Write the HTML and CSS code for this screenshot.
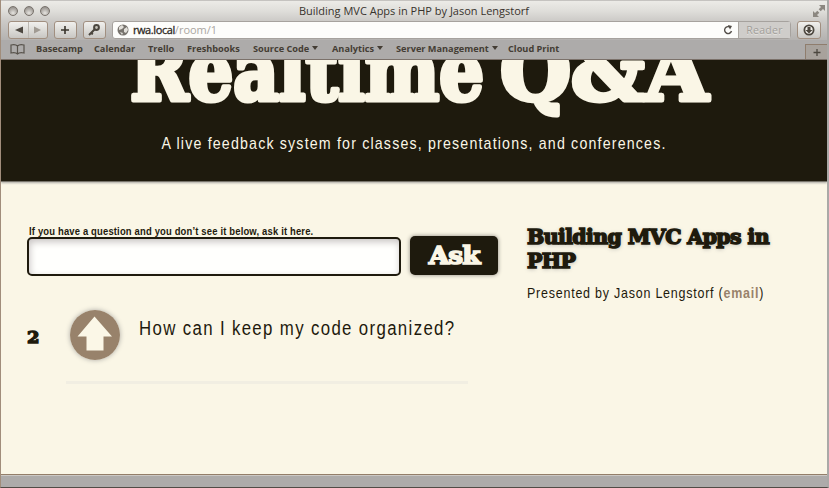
FILE: index.html
```html
<!DOCTYPE html>
<html lang="en">
<head>
<meta charset="utf-8">
<title>Building MVC Apps in PHP by Jason Lengstorf</title>
<link rel="stylesheet" href="styles.css">
</head>
<body>
<div class="window">
  <div class="titlebar">
    <div class="lights"><i></i><i></i><i></i></div>
    <span class="window-title">Building MVC Apps in PHP by Jason Lengstorf</span>
    <svg class="expand" width="12" height="12" viewBox="0 0 12 12"><path d="M6 0h6v6l-2-2-2.300 2.300-2-2L8 2zM0 6l2 2 2.300-2.300 2 2L4 10l2 2H0z" fill="#8b8780"/></svg>
  </div>
  <div class="toolbar">
    <div class="btn nav"><svg width="38" height="16" viewBox="0 0 38 16"><path d="M14 4.500v7L6 8z" fill="#4c4740"/><path d="M19.500 0v16" stroke="#bbb8b2"/><path d="M25 4.500v7l7-3.500z" fill="#a19b93"/></svg></div>
    <div class="btn plus"><svg width="20" height="16" viewBox="0 0 20 16"><path d="M10 4v8M6 8h8" stroke="#39342c" stroke-width="1.600"/></svg></div>
    <div class="btn key"><svg width="20" height="16" viewBox="0 0 20 16"><path d="M11 7l-6 6M7 11l2 1" stroke="#4b463e" stroke-width="2"/><circle cx="12.500" cy="5.500" r="2.400" fill="#c5c2ba" stroke="#4b463e" stroke-width="2"/></svg></div>
    <div class="address">
      <svg class="globe" width="12" height="12" viewBox="0 0 12 12"><circle cx="6" cy="6" r="5.500" fill="#77736d"/><path d="M2 3l3-2 2 2-2 2-3 1zM7 5l3-2 1 3-2 3-2-1zM3 8l3 1-1 2z" fill="#e2e0da"/></svg>
      <span class="url"><b>rwa.local</b>/room/1</span>
      <svg class="reload" width="10" height="10" viewBox="0 0 10 10"><path d="M7.500 2.500A3.500 3.500 0 1 0 8.500 6" fill="none" stroke="#55504a" stroke-width="1.400"/><path d="M5 0l4 1-2 3.500z" fill="#55504a"/></svg>
      <span class="reader">Reader</span>
    </div>
    <div class="btn download"><svg width="22" height="16" viewBox="0 0 22 16"><circle cx="11" cy="8" r="4.600" fill="#f3f1ec" stroke="#4c473f" stroke-width="1.800"/><path d="M9.500 5h3v3h2L11 11.500 7.500 8h2z" fill="#4c473f"/></svg></div>
  </div>
  <div class="bookmarks">
    <svg class="book" width="15" height="11" viewBox="0 0 15 11"><path d="M7.500 2C6 .5 3 .5 1 1v8c2-.5 5-.5 6.500 1C9 8.500 12 8.500 14 9V1C12 .5 9 .5 7.500 2v8" fill="none" stroke="#58534c" stroke-width="1.200"/></svg>
    <span class="b1">Basecamp</span><span class="b2">Calendar</span><span class="b3">Trello</span><span class="b4">Freshbooks</span><span class="b5 drop">Source Code</span><span class="b6 drop">Analytics</span><span class="b7 drop">Server Management</span><span class="b8">Cloud Print</span>
    <div class="newtab"><svg width="22" height="15" viewBox="0 0 22 15"><path d="M11 4v7M7.500 7.500h7" stroke="#4c473f" stroke-width="1.300"/></svg></div>
  </div>
  <div class="page">
    <header>
      <h1><svg width="826" height="62" viewBox="1 60 826 62"><text y="100"><tspan x="130" textLength="354" lengthAdjust="spacingAndGlyphs">Realtime</tspan><tspan x="500" textLength="208" lengthAdjust="spacingAndGlyphs">Q&amp;A</tspan></text></svg></h1>
      <p class="tagline"><span>A live feedback system for classes, presentations, and conferences.</span></p>
    </header>
    <div class="content">
      <main>
        <form>
          <div class="field">
            <label for="q"><span>If you have a question and you don’t see it below, ask it here.</span></label>
            <input id="q" type="text">
          </div>
          <button type="button"><span>Ask</span></button>
        </form>
        <div class="question">
          <strong class="votes"><span>2</span></strong>
          <div class="vote"><svg width="50" height="50" viewBox="0 0 50 50"><circle cx="25" cy="25" r="25" fill="#98826b"/><path d="M24.500 6.500L42 26.500h-8.500V40.500h-17V26.500H7.500z" fill="#fbf7e7"/></svg></div>
          <p><span>How can I keep my code organized?</span></p>
        </div>
        <div class="rule"></div>
      </main>
      <aside>
        <h2><span class="l1">Building MVC Apps in</span><br><span class="l2">PHP</span></h2>
        <p><span>Presented by Jason Lengstorf (<a>email</a>)</span></p>
      </aside>
    </div>
  </div>
  <div class="statusbar"></div>
</div>
</body>
</html>
```
FILE: styles.css
```css
* { box-sizing: border-box; }
body { margin: 0; width: 829px; height: 488px; overflow: hidden; background: #aaa8a5; font-family: "Liberation Sans", sans-serif; color: #1e1a0d; }
svg { display: block; }
.window { height: 488px; display: flex; flex-direction: column; border-left: 1px solid #a18d7b; border-right: 2px solid #aaa9a7; border-bottom: 1px solid #514b46; }
.titlebar { height: 21px; flex: none; display: flex; align-items: center; justify-content: space-between; padding: 0 2px 0 7px; background: linear-gradient(#ecebe7, #dfdeda 50%, #cccac7); border-top: 1px solid #c5c3c0; font: 11px "Open Sans", sans-serif; color: #38332d; }
.lights { display: flex; gap: 6px; width: 60px; }
.lights i { width: 10px; height: 10px; border-radius: 50%; border: 1px solid #78726c; background: radial-gradient(circle at 50% 75%, #e6e4e0, #aaa6a1 60%, #87827d); }
.window-title { margin-left: -5px; padding-bottom: 1px; }
.expand { margin-left: 48px; }
.toolbar { height: 19px; flex: none; display: flex; padding: 0 6px 0 7px; background: linear-gradient(#cccac7, #b4b2b0); }
.btn { height: 18px; border: 1px solid #a18f80; border-radius: 3px; background: linear-gradient(#f1f0ed, #c9c7c3); }
.nav { width: 40px; }
.plus { width: 23px; margin-left: 6px; }
.key { width: 23px; margin-left: 6px; }
.address { width: 681px; height: 18px; margin-left: 6px; display: flex; align-items: center; border: 1px solid #a6a29e; border-radius: 3px; background: #fdfdfb; }
.globe { margin-left: 4px; }
.url { flex: 1; margin-left: 4px; padding-bottom: 1px; font: 11px "Open Sans", sans-serif; letter-spacing: 0; color: #aaa6a1; }
.url b { font-weight: 400; color: #2d2923; letter-spacing: -.4px; -webkit-text-stroke: .3px; }
.reload { margin-right: 5px; }
.reader { width: 52px; height: 16px; text-align: center; font: 10.5px/16px "Open Sans", sans-serif; letter-spacing: .3px; color: #a19e99; background: #cfcdca; border-left: 1px solid #aaa6a0; text-shadow: 0 1px #e5e3e0; }
.download { width: 24px; margin-left: 6px; }
.bookmarks { height: 20px; flex: none; display: flex; align-items: center; padding: 0 0 1px 9px; background: #adabaa; border-bottom: 1px solid #7b716a; font: 700 9.200px "Open Sans", sans-serif; color: #443d34; white-space: nowrap; }
.bookmarks span { padding-bottom: 1px; }
.book { width: 15px; margin-right: 11px; }
.b1 { width: 58px; } .b2 { width: 54px; } .b3 { width: 39px; } .b4 { width: 66px; }
.b5 { width: 79px; } .b6 { width: 64px; } .b7 { width: 112px; }
.drop::after { content: ""; display: inline-block; margin-left: 3px; vertical-align: 2px; border: 3px solid transparent; border-top: 4px solid #443d34; border-bottom: 0; }
.newtab { margin-left: auto; margin-top: 5px; height: 15px; width: 22px; border: 1px solid #8f7d6d; border-right: 0; border-bottom: 0; background: #a8a29c; }
.page { height: 414px; flex: none; overflow: hidden; background: #faf6e6; }
header { height: 122px; background: #1e1a0d; border-bottom: 1px solid #77746b; box-shadow: 0 1px 2px #aaa9a4; color: #faf6e6; overflow: hidden; text-align: center; }
h1 { margin: 0; height: 62px; }
h1 text { font: 700 82px "DejaVu Serif", serif; fill: #faf6e6; stroke: #faf6e6; stroke-width: 5px; stroke-linejoin: round; }
.tagline { display: flex; justify-content: center; margin: 12px 0 0; font-size: 17px; line-height: 20px; letter-spacing: 1.4px; white-space: nowrap; }
.tagline span { transform: scaleX(.836); }
.content { display: flex; padding-left: 26px; }
main { width: 500px; flex: none; padding-top: 43px; }
form { display: flex; align-items: flex-end; gap: 9px; }
.field { width: 374px; }
label { display: block; padding-left: 2px; height: 12px; font-size: 11px; line-height: 13px; font-weight: 700; letter-spacing: .2px; white-space: nowrap; }
label span, .question p span, aside p span, h2 span { display: inline-block; transform-origin: 0 50%; }
label span { transform: scaleX(.857); }
input { display: block; width: 374px; height: 39px; border: 2px solid #1e1a0d; border-radius: 5px; background: #fffffd; box-shadow: inset 1px 3px 7px #c9c5c4; outline: 0; }
button { width: 88px; height: 39px; margin-bottom: 1px; padding: 0; border: 0; border-radius: 5px; background: #1e1a0d; box-shadow: 0 0 4px #88847c; color: #faf6e6; font: 700 24px "DejaVu Serif", serif; letter-spacing: -.8px; -webkit-text-stroke: 1.6px #faf6e6; }
button span { display: inline-block; transform: scaleX(1.1); }
.question { display: flex; padding-top: 34px; height: 98px; }
.votes { width: 43px; padding-top: 18px; font: 700 16px/20px "DejaVu Serif", serif; -webkit-text-stroke: 1.3px #1e1a0d; }
.votes span { display: inline-block; transform: scaleX(1.12); transform-origin: 0 50%; }
.vote { width: 50px; height: 50px; border-radius: 50%; box-shadow: 0 0 5px #aaa8a2; }
.question p { margin: 6px 0 0 19px; font-size: 20px; line-height: 24px; letter-spacing: 1.6px; white-space: nowrap; }
.question p span { transform: scaleX(.841); }
.rule { width: 402px; height: 3px; margin: 7px 0 0 39px; background: #f1eee2; }
aside { padding-top: 43px; white-space: nowrap; }
h2 { margin: 0; font: 700 20px/24px "DejaVu Serif", serif; letter-spacing: -.6px; -webkit-text-stroke: 1.5px #1e1a0d; text-shadow: 0 1px 4px #aaa9a4; }
h2 span { transform: scaleX(1.025); }
aside p { margin: 11px 0 0; font-size: 14.500px; line-height: 18px; letter-spacing: .9px; }
aside p span { transform: scaleX(.86); }
aside a { color: #98826b; font-weight: 700; }
.statusbar { flex: 1; border-top: 1px solid #937e69; background: #adabaa; box-shadow: inset 0 1px #cbc8c4; }
```
